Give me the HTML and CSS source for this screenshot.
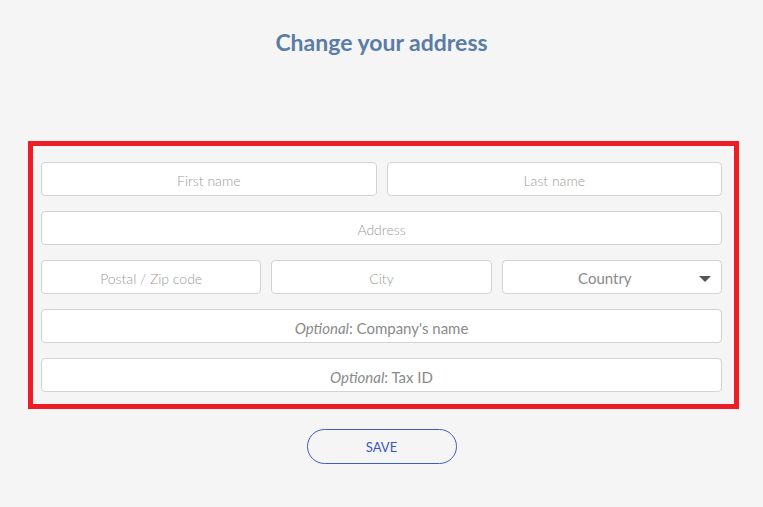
FILE: index.html
```html
<!DOCTYPE html>
<html lang="en">
<head>
<meta charset="utf-8">
<title>Change your address</title>
<link rel="stylesheet" href="styles.css">
</head>
<body>
<h1 class="title">Change your address</h1>
<form class="panel">
  <div class="row two">
    <div class="field light">First name</div>
    <div class="field light">Last name</div>
  </div>
  <div class="row">
    <div class="field light">Address</div>
  </div>
  <div class="row three">
    <div class="field light">Postal / Zip code</div>
    <div class="field light">City</div>
    <div class="field select"><span class="select-text">Country</span><span class="caret"></span></div>
  </div>
  <div class="row">
    <div class="field opt"><em>Optional</em>: Company's name</div>
  </div>
  <div class="row">
    <div class="field opt"><em>Optional</em>: Tax ID</div>
  </div>
</form>
<div class="actions">
  <button type="button" class="save">SAVE</button>
</div>
</body>
</html>
```
FILE: styles.css
```css
html, body {
  margin: 0;
  padding: 0;
  background: #f5f5f5;
  font-family: Lato, "Open Sans", sans-serif;
}
.title {
  margin: 28px 0 0;
  font-size: 23px;
  line-height: 28px;
  font-weight: 700;
  color: #5a7ca5;
  text-align: center;
}
.panel {
  box-sizing: border-box;
  width: 711px;
  margin: 85px 0 0 28px;
  border: 5px solid #ee1c25;
  padding: 16px 12px 12px 8px;
  display: flex;
  flex-direction: column;
  gap: 15px;
}
.row {
  display: grid;
  grid-template-columns: 1fr;
  gap: 10px;
}
.row.two { grid-template-columns: 1fr 1fr; }
.row.three { grid-template-columns: 1fr 1fr 1fr; }
.field {
  box-sizing: border-box;
  height: 34px;
  padding-top: 2px;
  background: #fff;
  border: 1px solid #d3d3d3;
  border-radius: 4px;
  display: flex;
  align-items: center;
  justify-content: center;
  color: #9a9a9a;
}
.light {
  font-weight: 300;
  font-size: 14px;
}
.opt {
  font-size: 15px;
  padding-top: 3px;
  color: #8a8a8a;
}
.opt em { font-style: italic; }
.select {
  position: relative;
  font-size: 15px;
  color: #8a8a8a;
  padding-right: 14px;
}
.caret {
  position: absolute;
  right: 10px;
  top: 15px;
  width: 0;
  height: 0;
  border-left: 6px solid transparent;
  border-right: 6px solid transparent;
  border-top: 6px solid #555;
}
.actions {
  display: flex;
  justify-content: center;
  margin-top: 20px;
}
.save {
  box-sizing: border-box;
  width: 150px;
  height: 35px;
  padding-top: 1px;
  background: transparent;
  border: 1px solid #3b5fc4;
  border-radius: 18px;
  color: #3b55c8;
  font-family: Lato, sans-serif;
  font-size: 13px;
  cursor: pointer;
}
```
